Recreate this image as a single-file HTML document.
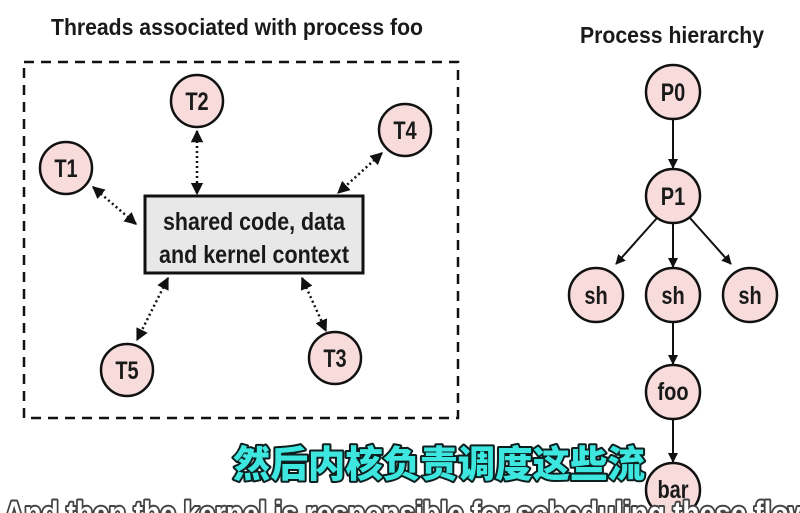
<!DOCTYPE html>
<html><head><meta charset="utf-8"><style>
html,body{margin:0;padding:0;background:#fff;width:800px;height:513px;overflow:hidden}
svg{display:block}
.t{font-family:"Liberation Sans",sans-serif;font-weight:bold;fill:#1a1a1a}
</style></head><body>
<svg width="800" height="513" viewBox="0 0 800 513" xmlns="http://www.w3.org/2000/svg">
<defs>
<marker id="a" viewBox="0 0 10 10" refX="9" refY="5" markerWidth="5" markerHeight="5" orient="auto-start-reverse"><path d="M0,0 L10,5 L0,10 z" fill="#111"/></marker>
</defs>
<text class="t" x="237" y="35" font-size="23" text-anchor="middle" textLength="372" lengthAdjust="spacingAndGlyphs">Threads associated with process foo</text>
<text class="t" x="672" y="43" font-size="23" text-anchor="middle" textLength="184" lengthAdjust="spacingAndGlyphs">Process hierarchy</text>
<rect x="24" y="62" width="434" height="356" fill="none" stroke="#111" stroke-width="2.5" stroke-dasharray="10,7"/>
<g stroke="#111" stroke-width="2.5" stroke-dasharray="2,3" fill="none" marker-start="url(#a)" marker-end="url(#a)">
<line x1="93" y1="187" x2="136" y2="224"/>
<line x1="197" y1="131" x2="197" y2="194"/>
<line x1="382" y1="153" x2="338" y2="193"/>
<line x1="168" y1="278" x2="137" y2="340"/>
<line x1="302" y1="278" x2="326" y2="331"/>
</g>
<rect x="145" y="196" width="218" height="77" fill="#e8e8e8" stroke="#111" stroke-width="3"/>
<text class="t" x="254" y="230" font-size="25" text-anchor="middle" textLength="182" lengthAdjust="spacingAndGlyphs">shared code, data</text>
<text class="t" x="254" y="263" font-size="25" text-anchor="middle" textLength="190" lengthAdjust="spacingAndGlyphs">and kernel context</text>
<g fill="#f8dcdc" stroke="#111" stroke-width="2.5">
<circle cx="197" cy="101" r="26"/><circle cx="66" cy="168" r="26"/><circle cx="405" cy="130" r="26"/>
<circle cx="127" cy="370" r="26"/><circle cx="335" cy="358" r="26"/>
</g>
<g class="t" font-size="25" text-anchor="middle">
<text transform="translate(197,110) scale(0.8,1)">T2</text>
<text transform="translate(66,177) scale(0.8,1)">T1</text>
<text transform="translate(405,139) scale(0.8,1)">T4</text>
<text transform="translate(127,379) scale(0.8,1)">T5</text>
<text transform="translate(335,367) scale(0.8,1)">T3</text>
</g>
<g stroke="#111" stroke-width="2" marker-end="url(#a)">
<line x1="673" y1="119" x2="673" y2="168"/>
<line x1="657" y1="218" x2="616" y2="264"/>
<line x1="673" y1="223" x2="673" y2="267"/>
<line x1="690" y1="218" x2="731" y2="264"/>
<line x1="673" y1="322" x2="673" y2="364"/>
<line x1="673" y1="419" x2="673" y2="462"/>
</g>
<g fill="#f8dcdc" stroke="#111" stroke-width="2.5">
<circle cx="673" cy="92" r="27"/><circle cx="673" cy="196" r="27"/>
<circle cx="596" cy="295" r="27"/><circle cx="673" cy="295" r="27"/><circle cx="750" cy="295" r="27"/>
<circle cx="673" cy="392" r="27"/><circle cx="673" cy="490" r="27"/>
</g>
<g class="t" font-size="25" text-anchor="middle">
<text transform="translate(673,101) scale(0.8,1)">P0</text>
<text transform="translate(673,205) scale(0.8,1)">P1</text>
<text transform="translate(596,304) scale(0.8,1)">sh</text>
<text transform="translate(673,304) scale(0.8,1)">sh</text>
<text transform="translate(750,304) scale(0.8,1)">sh</text>
<text transform="translate(673,400) scale(0.8,1)">foo</text>
<text transform="translate(673,498) scale(0.8,1)">bar</text>
</g>
<text x="439" y="477" font-size="37" text-anchor="middle" textLength="412" lengthAdjust="spacingAndGlyphs" font-family="'Noto Sans CJK SC',sans-serif" font-weight="900" fill="#3ee6e0" stroke="#0d1f1f" stroke-width="4" paint-order="stroke" stroke-linejoin="round">然后内核负责调度这些流</text>
<text x="4" y="524" font-size="32" font-family="'Liberation Sans',sans-serif" font-weight="bold" fill="#fff" stroke="#444" stroke-width="4" paint-order="stroke" stroke-linejoin="round" textLength="830" lengthAdjust="spacingAndGlyphs">And then the kernel is responsible for scheduling these flows.</text>
</svg>
</body></html>
